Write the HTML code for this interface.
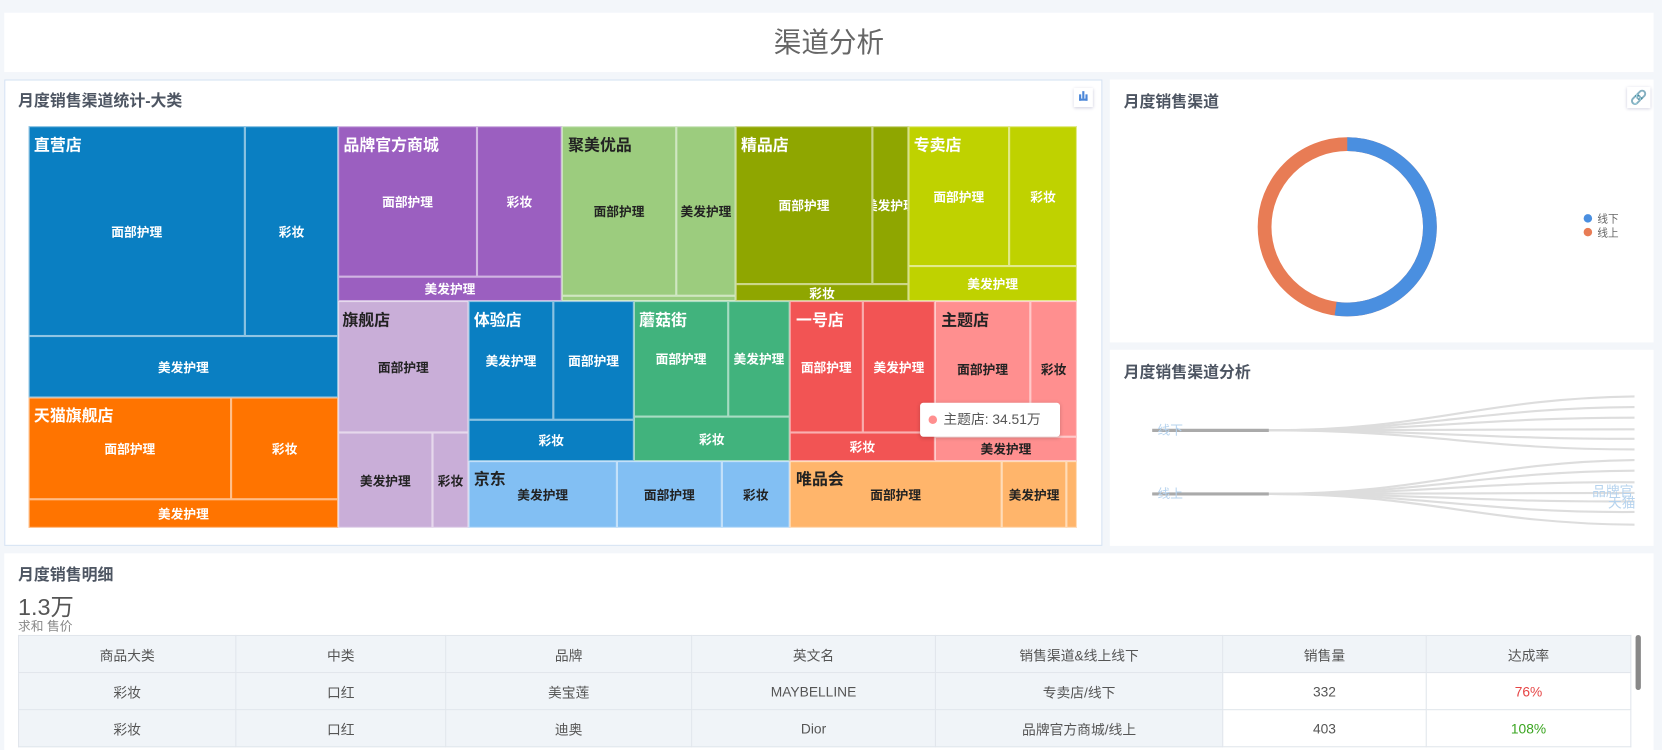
<!DOCTYPE html>
<html><head><meta charset="utf-8"><style>
*{margin:0;padding:0;box-sizing:border-box}
html,body{width:1662px;height:750px;overflow:hidden;background:#f3f6fa;font-family:"Liberation Sans","Noto Sans CJK SC",sans-serif}
#w{position:absolute;left:0;top:0;width:1568px;height:708px;transform:scale(1.06);transform-origin:0 0}
.p{position:absolute;background:#fff}
.t{position:absolute;font-size:15px;font-weight:bold;color:#4d5562}
.r{position:absolute;border:1px solid rgba(255,255,255,.55);display:flex;align-items:center;justify-content:center;font-size:12px;font-weight:bold;color:#fff;white-space:nowrap;overflow:hidden}
.k{color:#222}
.h{position:absolute;font-size:15px;font-weight:bold;color:#fff}
.hk{color:#222}
table{position:absolute;left:17px;top:599px;border-collapse:collapse;font-size:13px;color:#555}
td{border:1px solid #e1e6ec;text-align:center;height:35px;background:#f0f4f8}
td.w{background:#fff}
</style></head><body><div id="w">
<div class="p" style="left:4px;top:12px;width:1556px;height:56px;text-align:center;line-height:56px;font-size:26px;color:#666">渠道分析</div>

<div class="p" style="left:4px;top:75px;width:1036px;height:440px;border:1px solid #d6e3f3"></div>
<div class="t" style="left:17px;top:84px">月度销售渠道统计-大类</div>
<div style="position:absolute;left:1013px;top:83px;width:18px;height:18px;background:#fff;box-shadow:0 1px 3px #ccd"><div style="position:absolute;left:5px;top:6px;width:8px;height:6px;border:2px solid #4a86d8;border-top:none"></div><div style="position:absolute;left:8px;top:3px;width:2px;height:7px;background:#4a86d8"></div></div>

<!-- 直营店 -->
<div class="r" style="left:27px;top:119px;width:204px;height:198px;background:#0a7fc2">面部护理</div>
<div class="r" style="left:231px;top:119px;width:88px;height:198px;background:#0a7fc2">彩妆</div>
<div class="r" style="left:27px;top:317px;width:292px;height:58px;background:#0a7fc2">美发护理</div>
<div class="h" style="left:32px;top:126px">直营店</div>
<!-- 天猫 -->
<div class="r" style="left:27px;top:375px;width:191px;height:96px;background:#ff7400">面部护理</div>
<div class="r" style="left:218px;top:375px;width:101px;height:96px;background:#ff7400">彩妆</div>
<div class="r" style="left:27px;top:471px;width:292px;height:27px;background:#ff7400">美发护理</div>
<div class="h" style="left:32px;top:381px">天猫旗舰店</div>
<!-- 品牌官方商城 -->
<div class="r" style="left:319px;top:119px;width:131px;height:142px;background:#9b5fc0">面部护理</div>
<div class="r" style="left:450px;top:119px;width:80px;height:142px;background:#9b5fc0">彩妆</div>
<div class="r" style="left:319px;top:261px;width:211px;height:23px;background:#9b5fc0">美发护理</div>
<div class="h" style="left:324px;top:126px">品牌官方商城</div>
<!-- 聚美优品 -->
<div class="r k" style="left:530px;top:119px;width:108px;height:160px;background:#9ccc7e">面部护理</div>
<div class="r k" style="left:638px;top:119px;width:56px;height:160px;background:#9ccc7e">美发护理</div>
<div class="r" style="left:530px;top:279px;width:164px;height:5px;background:#9ccc7e"></div>
<div class="h hk" style="left:536px;top:126px">聚美优品</div>
<!-- 精品店 -->
<div class="r" style="left:694px;top:119px;width:129px;height:149px;background:#8fa600">面部护理</div>
<div class="r" style="left:823px;top:119px;width:34px;height:149px;background:#8fa600">美发护理</div>
<div class="r" style="left:694px;top:268px;width:163px;height:16px;background:#8fa600">彩妆</div>
<div class="h" style="left:699px;top:126px">精品店</div>
<!-- 专卖店 -->
<div class="r" style="left:857px;top:119px;width:95px;height:132px;background:#bfd200">面部护理</div>
<div class="r" style="left:952px;top:119px;width:64px;height:132px;background:#bfd200">彩妆</div>
<div class="r" style="left:857px;top:251px;width:159px;height:33px;background:#bfd200">美发护理</div>
<div class="h" style="left:862px;top:126px">专卖店</div>
<!-- 旗舰店 -->
<div class="r k" style="left:319px;top:284px;width:123px;height:124px;background:#c9aed8">面部护理</div>
<div class="r k" style="left:319px;top:408px;width:89px;height:90px;background:#c9aed8">美发护理</div>
<div class="r k" style="left:408px;top:408px;width:34px;height:90px;background:#c9aed8">彩妆</div>
<div class="h hk" style="left:323px;top:291px">旗舰店</div>
<!-- 体验店 -->
<div class="r" style="left:442px;top:284px;width:80px;height:112px;background:#0a7fc2">美发护理</div>
<div class="r" style="left:522px;top:284px;width:76px;height:112px;background:#0a7fc2">面部护理</div>
<div class="r" style="left:442px;top:396px;width:156px;height:39px;background:#0a7fc2">彩妆</div>
<div class="h" style="left:447px;top:291px">体验店</div>
<!-- 蘑菇街 -->
<div class="r" style="left:598px;top:284px;width:89px;height:109px;background:#41b37d">面部护理</div>
<div class="r" style="left:687px;top:284px;width:58px;height:109px;background:#41b37d">美发护理</div>
<div class="r" style="left:598px;top:393px;width:147px;height:42px;background:#41b37d">彩妆</div>
<div class="h" style="left:603px;top:291px">蘑菇街</div>
<!-- 一号店 -->
<div class="r" style="left:745px;top:284px;width:69px;height:124px;background:#f25454">面部护理</div>
<div class="r" style="left:814px;top:284px;width:68px;height:124px;background:#f25454">美发护理</div>
<div class="r" style="left:745px;top:408px;width:137px;height:27px;background:#f25454">彩妆</div>
<div class="h" style="left:751px;top:291px">一号店</div>
<!-- 主题店 -->
<div class="r k" style="left:882px;top:284px;width:90px;height:128px;background:#ff8f8f">面部护理</div>
<div class="r k" style="left:972px;top:284px;width:44px;height:128px;background:#ff8f8f">彩妆</div>
<div class="r k" style="left:882px;top:412px;width:134px;height:23px;background:#ff8f8f">美发护理</div>
<div class="h hk" style="left:888px;top:291px">主题店</div>
<!-- 京东 -->
<div class="r k" style="left:442px;top:435px;width:140px;height:63px;background:#82bff3">美发护理</div>
<div class="r k" style="left:582px;top:435px;width:99px;height:63px;background:#82bff3">面部护理</div>
<div class="r k" style="left:681px;top:435px;width:64px;height:63px;background:#82bff3">彩妆</div>
<div class="h hk" style="left:447px;top:441px">京东</div>
<!-- 唯品会 -->
<div class="r k" style="left:745px;top:435px;width:200px;height:63px;background:#ffb56b">面部护理</div>
<div class="r k" style="left:945px;top:435px;width:61px;height:63px;background:#ffb56b">美发护理</div>
<div class="r" style="left:1006px;top:435px;width:10px;height:63px;background:#ffb56b"></div>
<div class="h hk" style="left:751px;top:441px">唯品会</div>
<!-- tooltip -->
<div style="position:absolute;left:868px;top:380px;width:132px;height:32px;background:#fff;border-radius:3px;box-shadow:0 1px 4px rgba(0,0,0,.2);font-size:13px;color:#555;line-height:32px;padding-left:22px">主题店: 34.51万<span style="position:absolute;left:8px;top:12px;width:8px;height:8px;border-radius:50%;background:#ff8f8f"></span></div>

<!-- donut panel -->
<div class="p" style="left:1047px;top:75px;width:513px;height:248px"></div>
<div class="t" style="left:1060px;top:85px">月度销售渠道</div>
<div style="position:absolute;left:1535px;top:82px;width:22px;height:20px;background:#fff;box-shadow:0 1px 3px #ccd;color:#4a86d8;font-size:13px;text-align:center;line-height:20px">&#x1F517;</div>
<svg style="position:absolute;left:1180px;top:124px" width="182" height="182"><circle cx="91" cy="90" r="78" fill="none" stroke="#e87c55" stroke-width="13"/><circle cx="91" cy="90" r="78" fill="none" stroke="#4a8fe0" stroke-width="13" stroke-dasharray="256 500" transform="rotate(-90 91 90)"/></svg>
<div style="position:absolute;left:1494px;top:201px;font-size:10px;color:#666;line-height:13px"><div><span style="display:inline-block;width:8px;height:8px;border-radius:50%;background:#4a8fe0;margin-right:5px"></span>线下</div><div><span style="display:inline-block;width:8px;height:8px;border-radius:50%;background:#e87c55;margin-right:5px"></span>线上</div></div>

<!-- sankey panel -->
<div class="p" style="left:1047px;top:330px;width:513px;height:185px"></div>
<div class="t" style="left:1060px;top:340px">月度销售渠道分析</div>
<svg style="position:absolute;left:1047px;top:330px" width="513" height="185" fill="none" stroke="#ddd" stroke-width="2">
<path d="M40 76 L150 76"/><path d="M40 136 L150 136"/>
<path d="M150 76 C300 76 350 46 495 44"/><path d="M150 76 C300 76 350 55 495 54"/><path d="M150 76 C300 76 350 64 495 64"/><path d="M150 76 C300 76 350 75 495 75"/><path d="M150 76 C300 76 350 84 495 84"/><path d="M150 76 C300 76 350 94 495 94"/>
<path d="M150 136 C300 136 350 106 495 104"/><path d="M150 136 C300 136 350 115 495 114"/><path d="M150 136 C300 136 350 124 495 125"/><path d="M150 136 C300 136 350 135 495 135"/><path d="M150 136 C300 136 350 144 495 143"/><path d="M150 136 C300 136 350 154 495 153"/><path d="M150 136 C300 136 350 164 495 165"/>
<path d="M40 76 L150 76" stroke="#aaa" stroke-width="3"/><path d="M40 136 L150 136" stroke="#aaa" stroke-width="3"/>
<text x="45" y="80" font-size="12" fill="#b6d3ee" stroke="none">线下</text><text x="45" y="140" font-size="12" fill="#b6d3ee" stroke="none">线上</text>
<text x="455" y="138" font-size="13" fill="#b6d3ee" stroke="none">品牌官</text><text x="470" y="149" font-size="13" fill="#b6d3ee" stroke="none">天猫</text>
</svg>

<!-- bottom -->
<div class="p" style="left:4px;top:522px;width:1556px;height:186px"></div>
<div class="t" style="left:17px;top:531px">月度销售明细</div>
<div style="position:absolute;left:17px;top:555px;font-size:22px;color:#555">1.3万</div>
<div style="position:absolute;left:17px;top:582px;font-size:12px;color:#888">求和 售价</div>
<table>
<tr><td style="width:205px">商品大类</td><td style="width:198px">中类</td><td style="width:232px">品牌</td><td style="width:230px">英文名</td><td style="width:271px">销售渠道&amp;线上线下</td><td style="width:192px">销售量</td><td style="width:193px">达成率</td></tr>
<tr><td>彩妆</td><td>口红</td><td>美宝莲</td><td>MAYBELLINE</td><td>专卖店/线下</td><td class="w">332</td><td class="w" style="color:#e64545">76%</td></tr>
<tr><td>彩妆</td><td>口红</td><td>迪奥</td><td>Dior</td><td>品牌官方商城/线上</td><td class="w">403</td><td class="w" style="color:#3aa520">108%</td></tr>
</table>
<div style="position:absolute;left:1543px;top:599px;width:5px;height:52px;background:#888;border-radius:3px"></div>
</div></body></html>
